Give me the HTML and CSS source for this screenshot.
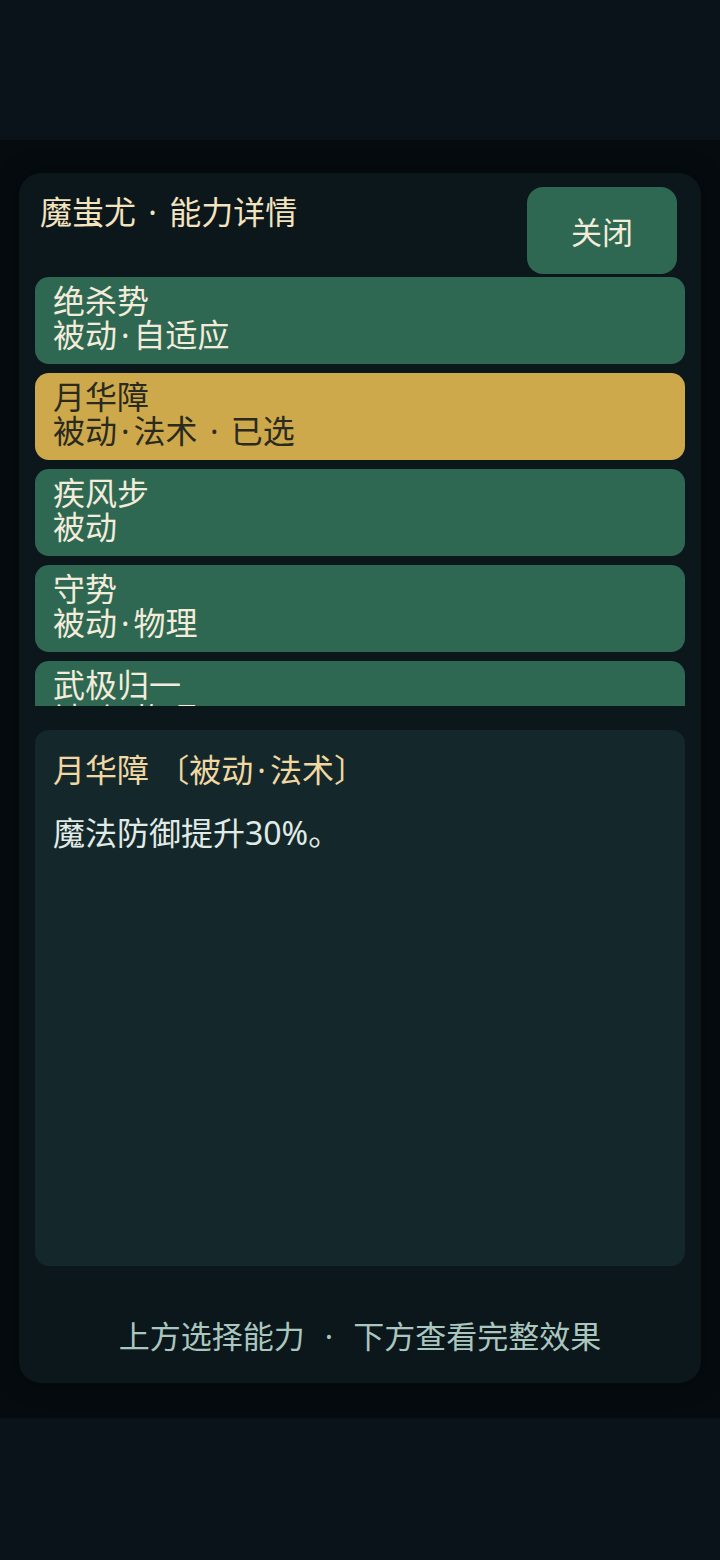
FILE: index.html
```html
<!DOCTYPE html>
<html lang="zh">
<head>
<meta charset="utf-8">
<link rel="stylesheet" href="styles.css">
</head>
<body>
<div class="top"></div>
<div class="scrim">
  <div class="panel">
    <div class="header">
      <div class="title">魔蚩尤 <span class="dot">·</span> 能力详情</div>
      <button class="close">关闭</button>
    </div>
    <div class="list">
      <div class="item">绝杀势<br>被动<span class="dot">·</span>自适应</div>
      <div class="item selected">月华障<br>被动<span class="dot">·</span>法术 <span class="dot">·</span> 已选</div>
      <div class="item">疾风步<br>被动</div>
      <div class="item">守势<br>被动<span class="dot">·</span>物理</div>
      <div class="item">武极归一<br>被动<span class="dot">·</span>物理</div>
    </div>
    <div class="detail">
      <div class="detail-title">月华障 〔被动<span class="dot">·</span>法术〕</div>
      <div class="detail-body">魔法防御提升30%。</div>
    </div>
    <div class="footer">上方选择能力 &nbsp;<span class="dot">·</span>&nbsp; 下方查看完整效果</div>
  </div>
</div>
</body>
</html>
```
FILE: styles.css
```css
html, body {
  margin: 0;
  padding: 0;
}
body {
  width: 720px;
  height: 1560px;
  background: #0a1319;
  font-family: "Noto Sans", "Noto Sans CJK SC", sans-serif;
  overflow: hidden;
}
.dot {
  margin: 0 4px;
}
.top {
  height: 140px;
}
.scrim {
  height: 1278px;
  background: #050b0f;
  padding: 33px 19px 0;
  box-sizing: border-box;
}
.panel {
  height: 1210px;
  background: #0c171c;
  border-radius: 22px;
  display: flex;
  flex-direction: column;
  box-shadow: 0 0 24px rgba(0, 0, 0, 0.35);
}
.header {
  display: flex;
  justify-content: space-between;
  align-items: flex-start;
  padding: 14px 24px 0 21px;
}
.title {
  padding-top: 5px;
  font-size: 32px;
  line-height: 40px;
  color: #f4e3bf;
}
.close {
  width: 150px;
  height: 87px;
  border: none;
  border-radius: 16px;
  background: #2e6852;
  color: #f3ecd9;
  font-family: inherit;
  font-size: 31px;
  padding: 0;
}
.list {
  margin: 3px 16px 0;
  height: 429px;
  overflow: hidden;
  display: flex;
  flex-direction: column;
  gap: 9px;
}
.item {
  flex: none;
  height: 87px;
  box-sizing: border-box;
  border-radius: 14px;
  background: #2e6852;
  color: #f3ecdb;
  padding: 7px 18px 0;
  font-size: 32px;
  line-height: 34px;
}
.item.selected {
  background: #cda94c;
  color: #2b2a1f;
}
.detail {
  margin: 24px 16px 0;
  height: 536px;
  box-sizing: border-box;
  background: #14282c;
  border-radius: 14px;
  padding: 23px 18px 0;
}
.detail-title {
  font-size: 32px;
  line-height: 34px;
  color: #f1d7a0;
}
.detail-body {
  margin-top: 29px;
  font-size: 32px;
  line-height: 34px;
  color: #e1ebe6;
}
.footer {
  margin-top: 50px;
  text-align: center;
  font-size: 31px;
  line-height: 40px;
  color: #a9c7bf;
}
```
